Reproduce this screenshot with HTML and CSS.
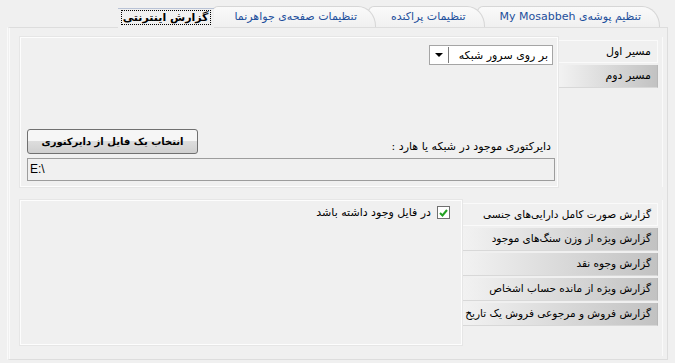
FILE: index.html
```html
<!DOCTYPE html>
<html lang="fa" dir="rtl">
<head>
  <meta charset="UTF-8">
  <title>گزارش اینترنتی</title>
  <link rel="stylesheet" href="styles.css">
</head>
<body>
  <div class="tabs">
    <a href="#" class="tab">تنظیم پوشه‌ی <span class="latin">My Mosabbeh</span></a>
    <a href="#" class="tab">تنظیمات پراکنده</a>
    <a href="#" class="tab">تنظیمات صفحه‌ی جواهرنما</a>
    <a href="#" class="tab active"><span class="focus">گزارش اینترنتی</span></a>
  </div>

  <div class="panel">
    <section class="group group-path">
      <ul class="side">
        <li>مسیر اول</li>
        <li class="selected">مسیر دوم</li>
      </ul>
      <div class="box box-path">
        <div class="select-row">
          <div class="select">
            <span class="select-text">بر روی سرور شبکه</span>
            <span class="select-arrow"></span>
          </div>
        </div>
        <div class="dir-row">
          <span class="dir-label">دایرکتوری موجود در شبکه یا هارد :</span>
          <button class="btn">انتخاب یک فایل از دایرکتوری</button>
        </div>
        <div class="textbox">E:\</div>
      </div>
    </section>

    <section class="group group-reports">
      <ul class="side side-wide">
        <li>گزارش صورت کامل دارایی‌های جنسی</li>
        <li class="selected">گزارش ویژه از وزن سنگ‌های موجود</li>
        <li class="selected">گزارش وجوه نقد</li>
        <li class="selected">گزارش ویژه از مانده حساب اشخاص</li>
        <li class="selected">گزارش فروش و مرجوعی فروش یک تاریخ</li>
      </ul>
      <div class="box box-options">
        <label class="check">
          <span class="check-box">
            <svg width="9" height="8" viewBox="0 0 9 8"><path d="M1 4 L3.5 6.5 L8 1" fill="none" stroke="#21a121" stroke-width="2"/></svg>
          </span>
          در فایل وجود داشته باشد
        </label>
      </div>
    </section>
  </div>
</body>
</html>
```

FILE: styles.css
```css
* {
  margin: 0;
  padding: 0;
  box-sizing: border-box;
}
body {
  background: #f0f0f0;
  color: #000;
  font-family: 'DejaVu Sans', sans-serif;
  font-size: 11px;
  width: 675px;
  height: 363px;
  overflow: hidden;
  position: relative;
}
.latin {
  font-family: Tahoma, 'DejaVu Sans', sans-serif;
}
.tabs {
  display: flex;
  padding: 6px 15px 0 0;
  height: 27px;
}
.tab {
  height: 21px;
  padding: 3px 18px 0 22px;
  margin-left: -8px;
  color: #1d4f9c;
  text-decoration: none;
  white-space: nowrap;
  border: 1px solid #d6d6d6;
  border-bottom: none;
  border-radius: 6px 18px 0 0 / 6px 20px 0 0;
  background: linear-gradient(#fafafa, #f0f0f0);
}
.tab.active {
  color: #000;
  font-weight: bold;
  margin-left: 0;
  margin-right: 6px;
  padding: 2px 4px 0 4px;
  border: none;
  border-top: 1px solid #b9c3d6;
  border-radius: 0;
  background: #f0f0f0;
  position: relative;
  top: 2px;
}
.focus {
  outline: 1px dotted #000;
  padding: 0 1px;
}
.panel {
  margin: 0 7px 0 7px;
  height: 333px;
  border: 1px solid #dddddd;
  border-left: 3px double #fafafa;
  padding: 9px 4px 0 10px;
}
.group {
  display: flex;
}
.group-path {
  height: 150px;
  margin-bottom: 13px;
}
.group-reports {
  height: 156px;
}
.side {
  list-style: none;
  width: 105px;
  padding: 3px 4px 0 0;
  border-left: 1px solid #e2e2e2;
  border-right: 1px solid #fafafa;
}
.side-wide {
  width: 201px;
  border-left: none;
  font-size: 10.5px;
}
.side li {
  height: 23px;
  margin-bottom: 2px;
  padding: 4px 6px 0 0;
  white-space: nowrap;
  border: 1px solid #fafafa;
  border-left: none;
}
.side li.selected {
  background: linear-gradient(to left, #c2c2c2, #f2f2f2);
  border: none;
  border-bottom: 1px solid #d8d8d8;
  border-right: 1px solid #b8b8b8;
}
.box {
  flex: 1;
  border: 1px solid #fdfdfd;
  box-shadow: 0 0 0 1px #e6e6e6;
}
.box-path {
  display: flex;
  flex-direction: column;
  padding: 7px 4px 5px 6px;
}
.box-options {
  height: 145px;
  padding: 5px 11px 0 0;
}
.select-row {
  display: flex;
  flex: 1;
}
.select {
  width: 124px;
  height: 20px;
  background: #fff;
  border: 1px solid #a5a5a5;
  display: flex;
  align-items: center;
}
.select-text {
  flex: 1;
  padding-right: 4px;
}
.select-arrow {
  width: 19px;
  height: 16px;
  border-right: 1px solid #7a7a7a;
  position: relative;
}
.select-arrow::after {
  content: "";
  position: absolute;
  left: 5px;
  top: 6px;
  border-left: 4px solid transparent;
  border-right: 4px solid transparent;
  border-top: 4px solid #000;
}
.dir-row {
  display: flex;
  justify-content: space-between;
  align-items: flex-end;
  padding: 0 2px 0 0;
  margin-bottom: 4px;
}
.dir-label {
  padding-bottom: 1px;
}
.btn {
  width: 171px;
  height: 25px;
  font-family: 'DejaVu Sans', sans-serif;
  font-size: 10px;
  font-weight: bold;
  color: #000;
  border: 1px solid #707070;
  border-radius: 3px;
  background: linear-gradient(#f6f6f6 50%, #dddddd 50%, #cfcfcf);
}
.textbox {
  height: 23px;
  border: 1px solid #9d9d9d;
  direction: ltr;
  font-family: 'Liberation Sans', sans-serif;
  font-size: 12px;
  padding: 3px 2px;
  margin: 0 -2px 0 0;
}
.check {
  display: flex;
  align-items: center;
  gap: 6px;
}
.check-box {
  width: 13px;
  height: 13px;
  background: #fff;
  border: 1px solid #707070;
  display: flex;
  align-items: center;
  justify-content: center;
}
```
